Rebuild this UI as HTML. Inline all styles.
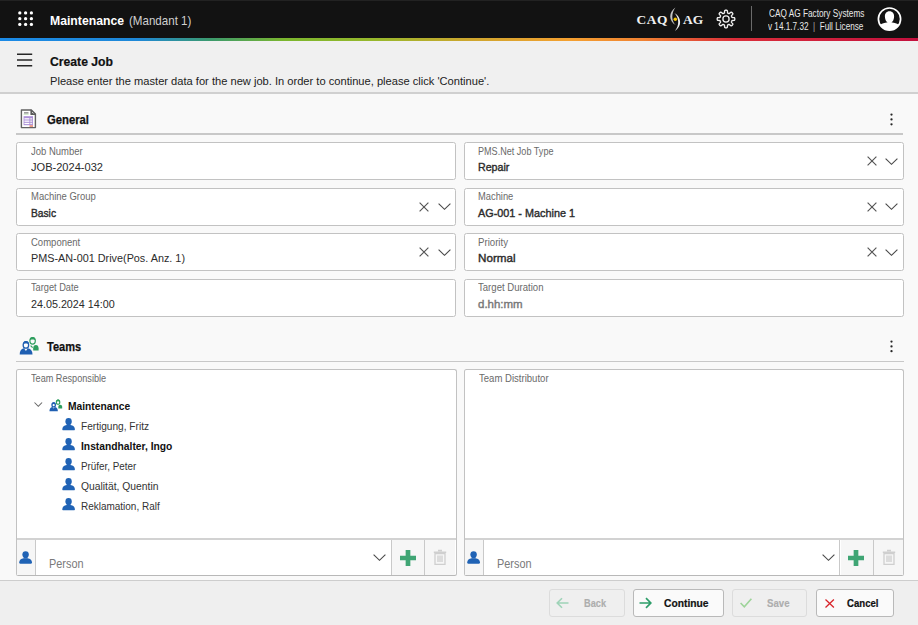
<!DOCTYPE html>
<html><head><meta charset="utf-8">
<style>
html,body{margin:0;padding:0}
body{width:918px;height:625px;overflow:hidden;position:relative;background:#f9f9f9;font-family:"Liberation Sans",sans-serif}
.a{position:absolute}
.t{position:absolute;white-space:nowrap}
.ic{position:absolute;overflow:visible}
.box{position:absolute;box-sizing:border-box;background:#fff;border:1.3px solid #c2c2c2;border-radius:2.5px}
.hdr{position:absolute;left:0;top:0;width:918px;height:38px;background:#121212;border-top:1px solid #222;box-sizing:border-box}
.grad{position:absolute;left:0;top:38px;width:918px;height:3px;background:linear-gradient(90deg,#1b8ae6 0%,#1e88d8 15%,#3c9a6c 23%,#7bb62e 31%,#98b82c 41%,#cda62e 51%,#f4a030 62%,#f08232 70%,#da2e3a 80%,#c3103e 100%)}
.tbar{position:absolute;left:0;top:41px;width:918px;height:51px;background:#f0f0f0;border-bottom:2px solid #d0d0d0}
.sline{position:absolute;height:1.9px;background:#c8c8c8}
.footer{position:absolute;left:0;top:580px;width:918px;height:45px;background:#efefef;border-top:1.3px solid #cdcdcd;box-sizing:border-box}
.btn{position:absolute;box-sizing:border-box;border-radius:3px;top:589.3px;height:27.3px}
.btn.dis{border:1px solid #dcdcdc;background:#efefef}
.btn.en{border:1px solid #b9b9b9;background:#fafafa}
</style></head><body>
<div class="hdr"></div>
<div class="grad"></div>
<!-- grid dots -->
<svg class="ic" style="left:16px;top:9.2px" width="20" height="20" viewBox="0 0 20 20" fill="#fff">
<circle cx="3.8" cy="3.9" r="1.65"/><circle cx="9.6" cy="3.9" r="1.65"/><circle cx="15.4" cy="3.9" r="1.65"/>
<circle cx="3.8" cy="9.7" r="1.65"/><circle cx="9.6" cy="9.7" r="1.65"/><circle cx="15.4" cy="9.7" r="1.65"/>
<circle cx="3.8" cy="15.4" r="1.65"/><circle cx="9.6" cy="15.4" r="1.65"/><circle cx="15.4" cy="15.4" r="1.65"/>
</svg>
<!-- logo -->
<div class="t" style="left:636.6px;top:11.7px;font-family:'Liberation Serif',serif;font-weight:bold;font-size:13.4px;line-height:15px;color:#f0f0f0;letter-spacing:0.55px">CAQ</div>
<div class="t" style="left:683px;top:11.7px;font-family:'Liberation Serif',serif;font-weight:bold;font-size:13.4px;line-height:15px;color:#f0f0f0;letter-spacing:0.1px">AG</div>
<svg class="ic" style="left:660px;top:4px" width="32" height="30" viewBox="0 0 32 30">
<path d="M15.4 3.4 C8.5 8 8.5 17 15.8 21.1 C11.2 17 11.2 9 15.4 3.4Z" fill="#c4c4c4"/>
<path d="M14.4 9.1 C22 13.5 22 22.5 14.9 26.9 C19.4 22 19.4 14 14.4 9.1Z" fill="#ececec"/>
<circle cx="15.3" cy="15.3" r="1.75" fill="#f5c400"/>
</svg>
<!-- gear -->
<svg class="ic" style="left:716.3px;top:9.1px" width="20" height="20" viewBox="0 0 20 20">
<path fill="none" stroke="#eeeeee" stroke-width="1.35" stroke-linejoin="round" d="M10.00 1.20 L10.23 1.20 L10.46 1.22 L10.69 1.25 L10.91 1.31 L11.13 1.45 L11.31 1.74 L11.42 2.32 L11.47 3.07 L11.53 3.64 L11.62 3.94 L11.75 4.09 L11.89 4.17 L12.04 4.24 L12.19 4.30 L12.33 4.36 L12.48 4.43 L12.63 4.49 L12.78 4.54 L12.94 4.58 L13.14 4.57 L13.42 4.42 L13.86 4.06 L14.42 3.56 L14.91 3.24 L15.25 3.16 L15.50 3.21 L15.70 3.33 L15.88 3.47 L16.06 3.62 L16.22 3.78 L16.38 3.94 L16.53 4.12 L16.67 4.30 L16.79 4.50 L16.84 4.75 L16.76 5.09 L16.44 5.58 L15.94 6.14 L15.58 6.58 L15.43 6.86 L15.42 7.06 L15.46 7.22 L15.51 7.37 L15.57 7.52 L15.64 7.67 L15.70 7.81 L15.76 7.96 L15.83 8.11 L15.91 8.25 L16.06 8.38 L16.36 8.47 L16.93 8.53 L17.68 8.58 L18.26 8.69 L18.55 8.87 L18.69 9.09 L18.75 9.31 L18.78 9.54 L18.80 9.77 L18.80 10.00 L18.80 10.23 L18.78 10.46 L18.75 10.69 L18.69 10.91 L18.55 11.13 L18.26 11.31 L17.68 11.42 L16.93 11.47 L16.36 11.53 L16.06 11.62 L15.91 11.75 L15.83 11.89 L15.76 12.04 L15.70 12.19 L15.64 12.33 L15.57 12.48 L15.51 12.63 L15.46 12.78 L15.42 12.94 L15.43 13.14 L15.58 13.42 L15.94 13.86 L16.44 14.42 L16.76 14.91 L16.84 15.25 L16.79 15.50 L16.67 15.70 L16.53 15.88 L16.38 16.06 L16.22 16.22 L16.06 16.38 L15.88 16.53 L15.70 16.67 L15.50 16.79 L15.25 16.84 L14.91 16.76 L14.42 16.44 L13.86 15.94 L13.42 15.58 L13.14 15.43 L12.94 15.42 L12.78 15.46 L12.63 15.51 L12.48 15.57 L12.33 15.64 L12.19 15.70 L12.04 15.76 L11.89 15.83 L11.75 15.91 L11.62 16.06 L11.53 16.36 L11.47 16.93 L11.42 17.68 L11.31 18.26 L11.13 18.55 L10.91 18.69 L10.69 18.75 L10.46 18.78 L10.23 18.80 L10.00 18.80 L9.77 18.80 L9.54 18.78 L9.31 18.75 L9.09 18.69 L8.87 18.55 L8.69 18.26 L8.58 17.68 L8.53 16.93 L8.47 16.36 L8.38 16.06 L8.25 15.91 L8.11 15.83 L7.96 15.76 L7.81 15.70 L7.67 15.64 L7.52 15.57 L7.37 15.51 L7.22 15.46 L7.06 15.42 L6.86 15.43 L6.58 15.58 L6.14 15.94 L5.58 16.44 L5.09 16.76 L4.75 16.84 L4.50 16.79 L4.30 16.67 L4.12 16.53 L3.94 16.38 L3.78 16.22 L3.62 16.06 L3.47 15.88 L3.33 15.70 L3.21 15.50 L3.16 15.25 L3.24 14.91 L3.56 14.42 L4.06 13.86 L4.42 13.42 L4.57 13.14 L4.58 12.94 L4.54 12.78 L4.49 12.63 L4.43 12.48 L4.36 12.33 L4.30 12.19 L4.24 12.04 L4.17 11.89 L4.09 11.75 L3.94 11.62 L3.64 11.53 L3.07 11.47 L2.32 11.42 L1.74 11.31 L1.45 11.13 L1.31 10.91 L1.25 10.69 L1.22 10.46 L1.20 10.23 L1.20 10.00 L1.20 9.77 L1.22 9.54 L1.25 9.31 L1.31 9.09 L1.45 8.87 L1.74 8.69 L2.32 8.58 L3.07 8.53 L3.64 8.47 L3.94 8.38 L4.09 8.25 L4.17 8.11 L4.24 7.96 L4.30 7.81 L4.36 7.67 L4.43 7.52 L4.49 7.37 L4.54 7.22 L4.58 7.06 L4.57 6.86 L4.42 6.58 L4.06 6.14 L3.56 5.58 L3.24 5.09 L3.16 4.75 L3.21 4.50 L3.33 4.30 L3.47 4.12 L3.62 3.94 L3.78 3.78 L3.94 3.62 L4.12 3.47 L4.30 3.33 L4.50 3.21 L4.75 3.16 L5.09 3.24 L5.58 3.56 L6.14 4.06 L6.58 4.42 L6.86 4.57 L7.06 4.58 L7.22 4.54 L7.37 4.49 L7.52 4.43 L7.67 4.36 L7.81 4.30 L7.96 4.24 L8.11 4.17 L8.25 4.09 L8.38 3.94 L8.47 3.64 L8.53 3.07 L8.58 2.32 L8.69 1.74 L8.87 1.45 L9.09 1.31 L9.31 1.25 L9.54 1.22 L9.77 1.20Z"/>
<circle cx="10" cy="10" r="3.1" fill="none" stroke="#eeeeee" stroke-width="1.3"/>
</svg>
<div class="a" style="left:751px;top:6px;width:1.2px;height:25px;background:#6a6a6a"></div>
<!-- avatar -->
<svg class="ic" style="left:877px;top:7px" width="25" height="25" viewBox="0 0 25 25">
<defs><clipPath id="avc"><circle cx="12.5" cy="12.1" r="11"/></clipPath></defs>
<circle cx="12.5" cy="12.1" r="11.1" fill="none" stroke="#fff" stroke-width="1.7"/>
<g clip-path="url(#avc)" fill="#fff">
<path d="M12.5 4.2 C15.6 4.2 17.3 6.5 17.1 9.8 C16.9 12.8 15.8 14.6 14.6 15.4 L14.6 16.2 L10.4 16.2 L10.4 15.4 C9.2 14.6 8.1 12.8 7.9 9.8 C7.7 6.5 9.4 4.2 12.5 4.2Z"/>
<path d="M0 26 L0 21.5 C2 17.5 6 16.3 9.5 15.6 L15.5 15.6 C19 16.3 23 17.5 25 21.5 L25 26Z"/>
</g>
</svg>
<div class="tbar"></div>
<!-- hamburger -->
<svg class="ic" style="left:16px;top:50px" width="18" height="20" viewBox="0 0 18 20"><path d="M1 4.3H16.2M1 10H16.2M1 15.8H16.2" stroke="#262626" stroke-width="1.4" fill="none"/></svg>

<!-- General section -->
<svg class="ic" style="left:20px;top:108.6px" width="17" height="20" viewBox="0 0 17 20">
<path d="M1.4 1 H11.3 L15.4 5.1 V18.6 H1.4 Z" fill="#fff" stroke="#626262" stroke-width="1.4" stroke-linejoin="round"/>
<path d="M11 1.2 V5.4 H15.2Z" fill="#5c5c5c" stroke="#5c5c5c" stroke-width="1.2" stroke-linejoin="round"/><path d="M12.2 3.2 L13.4 4.3" stroke="#fff" stroke-width="0.9"/>
<rect x="4" y="3.3" width="4.5" height="1.2" fill="#777"/>
<rect x="3.6" y="4.8" width="5" height="0.8" fill="#b6dcb0"/><rect x="3.6" y="7.2" width="9.4" height="9" fill="#ac90d8"/>
<rect x="4.4" y="9.2" width="5" height="1.3" fill="#fff"/><rect x="10.2" y="9.2" width="2" height="1.3" fill="#eee"/>
<rect x="4.4" y="11.5" width="5" height="1.3" fill="#fff"/><rect x="10.2" y="11.5" width="2" height="1.3" fill="#eee"/>
<rect x="4.4" y="13.8" width="5" height="1.3" fill="#fff"/><rect x="10.2" y="13.8" width="2" height="1.3" fill="#eee"/>
<rect x="9.5" y="16.3" width="3.5" height="1.5" fill="#e8836a"/>
</svg>
<svg class="ic" style="left:890.3px;top:112.5px" width="3" height="13" viewBox="0 0 3 13" fill="#262626"><circle cx="1.5" cy="1.6" r="1.15"/><circle cx="1.5" cy="6.4" r="1.15"/><circle cx="1.5" cy="11.3" r="1.15"/></svg>
<div class="sline" style="left:15.8px;top:133px;width:887.7px"></div>

<div class="box" style="left:16px;top:142px;width:440.3px;height:38.2px"></div><div class="box" style="left:464.3px;top:142px;width:439.8px;height:38.2px"></div><svg class="ic" style="left:866.8000000000001px;top:156.2px" width="10" height="10" viewBox="0 0 10 10"><path d="M0.6 0.6L9.4 9.4M9.4 0.6L0.6 9.4" stroke="#555" stroke-width="1.15" fill="none"/></svg><svg class="ic" style="left:885.3000000000001px;top:157.5px" width="13" height="7" viewBox="0 0 13 7"><path d="M0.6 0.6L6.5 6.3L12.4 0.6" stroke="#4a4a4a" stroke-width="1.15" fill="none"/></svg><div class="box" style="left:16px;top:187.5px;width:440.3px;height:38.2px"></div><svg class="ic" style="left:419.3px;top:201.7px" width="10" height="10" viewBox="0 0 10 10"><path d="M0.6 0.6L9.4 9.4M9.4 0.6L0.6 9.4" stroke="#555" stroke-width="1.15" fill="none"/></svg><svg class="ic" style="left:437.6px;top:203.0px" width="13" height="7" viewBox="0 0 13 7"><path d="M0.6 0.6L6.5 6.3L12.4 0.6" stroke="#4a4a4a" stroke-width="1.15" fill="none"/></svg><div class="box" style="left:464.3px;top:187.5px;width:439.8px;height:38.2px"></div><svg class="ic" style="left:866.8000000000001px;top:201.7px" width="10" height="10" viewBox="0 0 10 10"><path d="M0.6 0.6L9.4 9.4M9.4 0.6L0.6 9.4" stroke="#555" stroke-width="1.15" fill="none"/></svg><svg class="ic" style="left:885.3000000000001px;top:203.0px" width="13" height="7" viewBox="0 0 13 7"><path d="M0.6 0.6L6.5 6.3L12.4 0.6" stroke="#4a4a4a" stroke-width="1.15" fill="none"/></svg><div class="box" style="left:16px;top:233.2px;width:440.3px;height:38.2px"></div><svg class="ic" style="left:419.3px;top:247.39999999999998px" width="10" height="10" viewBox="0 0 10 10"><path d="M0.6 0.6L9.4 9.4M9.4 0.6L0.6 9.4" stroke="#555" stroke-width="1.15" fill="none"/></svg><svg class="ic" style="left:437.6px;top:248.7px" width="13" height="7" viewBox="0 0 13 7"><path d="M0.6 0.6L6.5 6.3L12.4 0.6" stroke="#4a4a4a" stroke-width="1.15" fill="none"/></svg><div class="box" style="left:464.3px;top:233.2px;width:439.8px;height:38.2px"></div><svg class="ic" style="left:866.8000000000001px;top:247.39999999999998px" width="10" height="10" viewBox="0 0 10 10"><path d="M0.6 0.6L9.4 9.4M9.4 0.6L0.6 9.4" stroke="#555" stroke-width="1.15" fill="none"/></svg><svg class="ic" style="left:885.3000000000001px;top:248.7px" width="13" height="7" viewBox="0 0 13 7"><path d="M0.6 0.6L6.5 6.3L12.4 0.6" stroke="#4a4a4a" stroke-width="1.15" fill="none"/></svg><div class="box" style="left:16px;top:278.8px;width:440.3px;height:38.2px"></div><div class="box" style="left:464.3px;top:278.8px;width:439.8px;height:38.2px"></div>

<!-- Teams section -->
<svg class="ic" style="left:18.5px;top:336px" width="21" height="19" viewBox="0 0 21 19">
<ellipse cx="13.6" cy="4.8" rx="2.7" ry="3.3" fill="none" stroke="#2e9e5e" stroke-width="1.2"/>
<path d="M10.9 4.4 C10.9 1.6 12.4 0.9 13.6 0.9 C15 0.9 16.3 1.6 16.3 4.4 C15.4 3.1 11.8 3.1 10.9 4.4Z" fill="#2e9e5e"/>
<path d="M14.2 14.5 V12.2 C14.2 10.1 15.3 8.9 16.9 8.9 C18.5 8.9 19.6 10.1 19.6 12.2 V14.5Z" fill="#2e9e5e"/>
<path d="M11.6 9.6 L13.6 11.7" stroke="#2e9e5e" stroke-width="1.2"/>
<ellipse cx="6.9" cy="8.9" rx="2.75" ry="3.25" fill="#fff" stroke="#1f5fb2" stroke-width="1.3"/>
<path d="M4.1 8.6 C4.1 5.8 5.5 5 6.9 5 C8.4 5 9.7 5.8 9.7 8.6 C8.7 7.2 5.1 7.2 4.1 8.6Z" fill="#1f5fb2"/>
<path d="M0.7 18.5 C0.7 15.2 1.8 13 4.9 12.3 L6.9 14.9 L8.9 12.3 C12.2 13 13.5 15.2 13.5 18.5Z" fill="#1f5fb2"/>
</svg>
<svg class="ic" style="left:890.3px;top:339.6px" width="3" height="13" viewBox="0 0 3 13" fill="#262626"><circle cx="1.5" cy="1.6" r="1.15"/><circle cx="1.5" cy="6.4" r="1.15"/><circle cx="1.5" cy="11.2" r="1.15"/></svg>
<div class="sline" style="left:15.8px;top:360.5px;width:887.8px"></div>

<!-- team boxes -->
<div class="box" style="left:16px;top:369.3px;width:440.5px;height:207.2px;border-bottom:1.9px solid #b8b8b8"></div>
<div class="box" style="left:464.3px;top:369.3px;width:440px;height:207.2px;border-bottom:1.9px solid #b8b8b8"></div>

<!-- left team box inner -->
<div class="a" style="left:17px;top:538.3px;width:438.5px;height:1.3px;background:#d2d2d2"></div>
<div class="a" style="left:17px;top:539.6px;width:18.6px;height:35.2px;background:#f6f6f6"></div>
<div class="a" style="left:35.3px;top:539.6px;width:1.2px;height:35.2px;background:#c9c9c9"></div>
<div class="a" style="left:391px;top:539.6px;width:1.2px;height:35.2px;background:#c9c9c9"></div>
<div class="a" style="left:392.2px;top:539.6px;width:32px;height:35.2px;background:#f6f6f6"></div>
<div class="a" style="left:424.2px;top:539.6px;width:1.2px;height:35.2px;background:#c9c9c9"></div>
<div class="a" style="left:425.4px;top:539.6px;width:30px;height:35.2px;background:#f6f6f6"></div>

<div class="a" style="left:465.3px;top:538.3px;width:438px;height:1.3px;background:#d2d2d2"></div>
<div class="a" style="left:465.3px;top:539.6px;width:17.8px;height:35.2px;background:#f6f6f6"></div>
<div class="a" style="left:482.9px;top:539.6px;width:1.2px;height:35.2px;background:#c9c9c9"></div>
<div class="a" style="left:839.3px;top:539.6px;width:1.2px;height:35.2px;background:#c9c9c9"></div>
<div class="a" style="left:840.5px;top:539.6px;width:32px;height:35.2px;background:#f6f6f6"></div>
<div class="a" style="left:872.5px;top:539.6px;width:1.2px;height:35.2px;background:#c9c9c9"></div>
<div class="a" style="left:873.7px;top:539.6px;width:29.6px;height:35.2px;background:#f6f6f6"></div>

<!-- tree -->
<svg class="ic" style="left:33.6px;top:402.3px" width="8.6" height="5" viewBox="0 0 8.6 5"><path d="M0.5 0.5L4.3 4.3L8.1 0.5" stroke="#666" stroke-width="1.05" fill="none"/></svg>
<svg class="ic" style="left:49.2px;top:398.5px" width="13.6" height="12.2" viewBox="0 0 20.3 18.6">
<ellipse cx="13.6" cy="4.8" rx="2.6" ry="3.2" fill="none" stroke="#2e9e5e" stroke-width="1.8"/>
<path d="M10.9 4.4 C10.9 1.6 12.4 0.9 13.6 0.9 C15 0.9 16.3 1.6 16.3 4.4 C15.4 3.1 11.8 3.1 10.9 4.4Z" fill="#2e9e5e"/>
<path d="M14 14.6 V12.2 C14 10 15.2 8.7 16.9 8.7 C18.6 8.7 19.9 10 19.9 12.2 V14.6Z" fill="#2e9e5e"/>
<ellipse cx="6.9" cy="9" rx="2.6" ry="3.1" fill="#fff" stroke="#1f5fb2" stroke-width="1.9"/>
<path d="M4.1 8.6 C4.1 5.8 5.5 5 6.9 5 C8.4 5 9.7 5.8 9.7 8.6 C8.7 7.2 5.1 7.2 4.1 8.6Z" fill="#1f5fb2"/>
<path d="M0.5 18.6 C0.5 15.2 1.6 12.9 4.9 12.2 L6.9 14.6 L8.9 12.2 C12.2 12.9 13.3 15.2 13.3 18.6Z" fill="#1f5fb2"/>
</svg>
<svg class="ic" style="left:62px;top:418.4px" width="13.2" height="12.3" viewBox="0 0 13 12.3"><ellipse cx="6.5" cy="3.4" rx="3.2" ry="3.35" fill="#2063b5"/><path d="M4.6 5.5 H8.4 V7.2 H4.6Z" fill="#2063b5"/><path d="M1.3 12.3 C0.4 12.3 0.1 11.7 0.2 10.9 C0.5 8.6 1.8 7.4 4.6 6.9 L8.4 6.9 C11.2 7.4 12.5 8.6 12.8 10.9 C12.9 11.7 12.6 12.3 11.7 12.3Z" fill="#2063b5"/></svg><svg class="ic" style="left:62px;top:438.4px" width="13.2" height="12.3" viewBox="0 0 13 12.3"><ellipse cx="6.5" cy="3.4" rx="3.2" ry="3.35" fill="#2063b5"/><path d="M4.6 5.5 H8.4 V7.2 H4.6Z" fill="#2063b5"/><path d="M1.3 12.3 C0.4 12.3 0.1 11.7 0.2 10.9 C0.5 8.6 1.8 7.4 4.6 6.9 L8.4 6.9 C11.2 7.4 12.5 8.6 12.8 10.9 C12.9 11.7 12.6 12.3 11.7 12.3Z" fill="#2063b5"/></svg><svg class="ic" style="left:62px;top:458.4px" width="13.2" height="12.3" viewBox="0 0 13 12.3"><ellipse cx="6.5" cy="3.4" rx="3.2" ry="3.35" fill="#2063b5"/><path d="M4.6 5.5 H8.4 V7.2 H4.6Z" fill="#2063b5"/><path d="M1.3 12.3 C0.4 12.3 0.1 11.7 0.2 10.9 C0.5 8.6 1.8 7.4 4.6 6.9 L8.4 6.9 C11.2 7.4 12.5 8.6 12.8 10.9 C12.9 11.7 12.6 12.3 11.7 12.3Z" fill="#2063b5"/></svg><svg class="ic" style="left:62px;top:478.4px" width="13.2" height="12.3" viewBox="0 0 13 12.3"><ellipse cx="6.5" cy="3.4" rx="3.2" ry="3.35" fill="#2063b5"/><path d="M4.6 5.5 H8.4 V7.2 H4.6Z" fill="#2063b5"/><path d="M1.3 12.3 C0.4 12.3 0.1 11.7 0.2 10.9 C0.5 8.6 1.8 7.4 4.6 6.9 L8.4 6.9 C11.2 7.4 12.5 8.6 12.8 10.9 C12.9 11.7 12.6 12.3 11.7 12.3Z" fill="#2063b5"/></svg><svg class="ic" style="left:62px;top:498.4px" width="13.2" height="12.3" viewBox="0 0 13 12.3"><ellipse cx="6.5" cy="3.4" rx="3.2" ry="3.35" fill="#2063b5"/><path d="M4.6 5.5 H8.4 V7.2 H4.6Z" fill="#2063b5"/><path d="M1.3 12.3 C0.4 12.3 0.1 11.7 0.2 10.9 C0.5 8.6 1.8 7.4 4.6 6.9 L8.4 6.9 C11.2 7.4 12.5 8.6 12.8 10.9 C12.9 11.7 12.6 12.3 11.7 12.3Z" fill="#2063b5"/></svg><svg class="ic" style="left:18.6px;top:551px" width="13.2" height="12.8" viewBox="0 0 13 12.3"><ellipse cx="6.5" cy="3.4" rx="3.2" ry="3.35" fill="#2063b5"/><path d="M4.6 5.5 H8.4 V7.2 H4.6Z" fill="#2063b5"/><path d="M1.3 12.3 C0.4 12.3 0.1 11.7 0.2 10.9 C0.5 8.6 1.8 7.4 4.6 6.9 L8.4 6.9 C11.2 7.4 12.5 8.6 12.8 10.9 C12.9 11.7 12.6 12.3 11.7 12.3Z" fill="#2063b5"/></svg><svg class="ic" style="left:373.2px;top:554.2px" width="13" height="7" viewBox="0 0 13 7"><path d="M0.6 0.6L6.5 6.3L12.4 0.6" stroke="#4a4a4a" stroke-width="1.15" fill="none"/></svg><svg class="ic" style="left:399.8px;top:549.8px" width="16" height="16" viewBox="0 0 16 16"><path d="M5.65 0H10.35V5.65H16V10.35H10.35V16H5.65V10.35H0V5.65H5.65Z" fill="#3fa574"/></svg><svg class="ic" style="left:433.2px;top:549px" width="14" height="16" viewBox="0 0 14 16"><path d="M5 1.5H9M0.8 3.3H13.2" stroke="#cfcfcf" stroke-width="1.4" fill="none"/><path d="M2 4.5H12V15.3H2Z" fill="none" stroke="#cfcfcf" stroke-width="1.3"/><rect x="4" y="6.5" width="6" height="6.5" fill="#dcdcdc"/></svg><svg class="ic" style="left:466.90000000000003px;top:551px" width="13.2" height="12.8" viewBox="0 0 13 12.3"><ellipse cx="6.5" cy="3.4" rx="3.2" ry="3.35" fill="#2063b5"/><path d="M4.6 5.5 H8.4 V7.2 H4.6Z" fill="#2063b5"/><path d="M1.3 12.3 C0.4 12.3 0.1 11.7 0.2 10.9 C0.5 8.6 1.8 7.4 4.6 6.9 L8.4 6.9 C11.2 7.4 12.5 8.6 12.8 10.9 C12.9 11.7 12.6 12.3 11.7 12.3Z" fill="#2063b5"/></svg><svg class="ic" style="left:821.5px;top:554.2px" width="13" height="7" viewBox="0 0 13 7"><path d="M0.6 0.6L6.5 6.3L12.4 0.6" stroke="#4a4a4a" stroke-width="1.15" fill="none"/></svg><svg class="ic" style="left:848.1px;top:549.8px" width="16" height="16" viewBox="0 0 16 16"><path d="M5.65 0H10.35V5.65H16V10.35H10.35V16H5.65V10.35H0V5.65H5.65Z" fill="#3fa574"/></svg><svg class="ic" style="left:881.5px;top:549px" width="14" height="16" viewBox="0 0 14 16"><path d="M5 1.5H9M0.8 3.3H13.2" stroke="#cfcfcf" stroke-width="1.4" fill="none"/><path d="M2 4.5H12V15.3H2Z" fill="none" stroke="#cfcfcf" stroke-width="1.3"/><rect x="4" y="6.5" width="6" height="6.5" fill="#dcdcdc"/></svg>

<div class="footer"></div>
<div class="btn dis" style="left:549.3px;width:75.6px"></div>
<div class="btn en" style="left:633.2px;width:90.4px"></div>
<div class="btn dis" style="left:732.4px;width:74.6px"></div>
<div class="btn en" style="left:816px;width:77.6px"></div>
<svg class="ic" style="left:555.5px;top:597px" width="13" height="12" viewBox="0 0 13 12"><path d="M12.5 6H1.2M6 1.2L1.2 6L6 10.8" stroke="#9fd3b8" stroke-width="1.6" fill="none"/></svg>
<svg class="ic" style="left:639.4px;top:597px" width="13" height="12" viewBox="0 0 13 12"><path d="M0.5 6H11.8M7 1.2L11.8 6L7 10.8" stroke="#2e9e6a" stroke-width="1.7" fill="none"/></svg>
<svg class="ic" style="left:739.7px;top:597.5px" width="12" height="10" viewBox="0 0 12 10"><path d="M0.6 5L4.3 8.8L11.4 0.8" stroke="#9ed49a" stroke-width="1.6" fill="none"/></svg>
<svg class="ic" style="left:825px;top:598.6px" width="9.4" height="9" viewBox="0 0 9.4 9"><path d="M0.5 0.5L8.9 8.5M8.9 0.5L0.5 8.5" stroke="#d8232a" stroke-width="1.3" fill="none"/></svg>

<div class="t" id="t0" style="left:50.00px;top:14.92px;font-size:12.6px;line-height:12.6px;font-weight:bold;color:#ffffff;font-family:'Liberation Sans', sans-serif;transform:scaleX(0.9699);transform-origin:0 0;">Maintenance<span class="bl" style="display:inline-block;width:0;height:0"></span></div><div class="t" id="t1" style="left:128.90px;top:14.92px;font-size:12.6px;line-height:12.6px;font-weight:normal;color:#d0d0d0;font-family:'Liberation Sans', sans-serif;transform:scaleX(0.9189);transform-origin:0 0;">(Mandant 1)<span class="bl" style="display:inline-block;width:0;height:0"></span></div><div class="t" id="t2" style="left:768.70px;top:8.72px;font-size:10px;line-height:10px;font-weight:normal;color:#e8e8e8;font-family:'Liberation Sans', sans-serif;transform:scaleX(0.8253);transform-origin:0 0;">CAQ AG Factory Systems<span class="bl" style="display:inline-block;width:0;height:0"></span></div><div class="t" id="t3" style="left:768.20px;top:21.91px;font-size:10px;line-height:10px;font-weight:normal;color:#e8e8e8;font-family:'Liberation Sans', sans-serif;transform:scaleX(0.8183);transform-origin:0 0;">v 14.1.7.32 &nbsp;<span style="color:#aaa">|</span>&nbsp; Full License<span class="bl" style="display:inline-block;width:0;height:0"></span></div><div class="t" id="t4" style="left:50.00px;top:55.72px;font-size:12.6px;line-height:12.6px;font-weight:bold;color:#111;font-family:'Liberation Sans', sans-serif;-webkit-text-stroke:0.2px #111;transform:scaleX(0.9678);transform-origin:0 0;">Create Job<span class="bl" style="display:inline-block;width:0;height:0"></span></div><div class="t" id="t5" style="left:50.00px;top:75.71px;font-size:10.6px;line-height:10.6px;font-weight:normal;color:#222;font-family:'Liberation Sans', sans-serif;transform:scaleX(1.0494);transform-origin:0 0;">Please enter the master data for the new job. In order to continue, please click 'Continue'.<span class="bl" style="display:inline-block;width:0;height:0"></span></div><div class="t" id="t6" style="left:47.10px;top:113.61px;font-size:12.2px;line-height:12.2px;font-weight:bold;color:#111;font-family:'Liberation Sans', sans-serif;-webkit-text-stroke:0.25px #111;transform:scaleX(0.9253);transform-origin:0 0;">General<span class="bl" style="display:inline-block;width:0;height:0"></span></div><div class="t" id="t7" style="left:47.20px;top:341.30px;font-size:12.2px;line-height:12.2px;font-weight:bold;color:#111;font-family:'Liberation Sans', sans-serif;-webkit-text-stroke:0.25px #111;transform:scaleX(0.9041);transform-origin:0 0;">Teams<span class="bl" style="display:inline-block;width:0;height:0"></span></div><div class="t" id="t8" style="left:30.50px;top:146.60px;font-size:10.4px;line-height:10.4px;font-weight:normal;color:#6a6a6a;font-family:'Liberation Sans', sans-serif;transform:scaleX(0.9115);transform-origin:0 0;">Job Number<span class="bl" style="display:inline-block;width:0;height:0"></span></div><div class="t" id="t9" style="left:30.50px;top:160.90px;font-size:11.6px;line-height:11.6px;font-weight:normal;color:#2b2b2b;font-family:'Liberation Sans', sans-serif;transform:scaleX(0.9548);transform-origin:0 0;">JOB-2024-032<span class="bl" style="display:inline-block;width:0;height:0"></span></div><div class="t" id="t10" style="left:478.30px;top:146.60px;font-size:10.4px;line-height:10.4px;font-weight:normal;color:#6a6a6a;font-family:'Liberation Sans', sans-serif;transform:scaleX(0.8735);transform-origin:0 0;">PMS.Net Job Type<span class="bl" style="display:inline-block;width:0;height:0"></span></div><div class="t" id="t11" style="left:478.30px;top:160.90px;font-size:11.6px;line-height:11.6px;font-weight:normal;color:#2b2b2b;font-family:'Liberation Sans', sans-serif;-webkit-text-stroke:0.4px #2b2b2b;transform:scaleX(0.9193);transform-origin:0 0;">Repair<span class="bl" style="display:inline-block;width:0;height:0"></span></div><div class="t" id="t12" style="left:30.50px;top:192.21px;font-size:10.4px;line-height:10.4px;font-weight:normal;color:#6a6a6a;font-family:'Liberation Sans', sans-serif;transform:scaleX(0.9107);transform-origin:0 0;">Machine Group<span class="bl" style="display:inline-block;width:0;height:0"></span></div><div class="t" id="t13" style="left:30.50px;top:206.51px;font-size:11.6px;line-height:11.6px;font-weight:normal;color:#2b2b2b;font-family:'Liberation Sans', sans-serif;-webkit-text-stroke:0.4px #2b2b2b;transform:scaleX(0.8815);transform-origin:0 0;">Basic<span class="bl" style="display:inline-block;width:0;height:0"></span></div><div class="t" id="t14" style="left:478.30px;top:192.21px;font-size:10.4px;line-height:10.4px;font-weight:normal;color:#6a6a6a;font-family:'Liberation Sans', sans-serif;transform:scaleX(0.8986);transform-origin:0 0;">Machine<span class="bl" style="display:inline-block;width:0;height:0"></span></div><div class="t" id="t15" style="left:478.30px;top:206.51px;font-size:11.6px;line-height:11.6px;font-weight:normal;color:#2b2b2b;font-family:'Liberation Sans', sans-serif;-webkit-text-stroke:0.4px #2b2b2b;transform:scaleX(0.9349);transform-origin:0 0;">AG-001 - Machine 1<span class="bl" style="display:inline-block;width:0;height:0"></span></div><div class="t" id="t16" style="left:30.50px;top:237.80px;font-size:10.4px;line-height:10.4px;font-weight:normal;color:#6a6a6a;font-family:'Liberation Sans', sans-serif;transform:scaleX(0.9156);transform-origin:0 0;">Component<span class="bl" style="display:inline-block;width:0;height:0"></span></div><div class="t" id="t17" style="left:30.50px;top:252.11px;font-size:11.6px;line-height:11.6px;font-weight:normal;color:#2b2b2b;font-family:'Liberation Sans', sans-serif;transform:scaleX(0.9336);transform-origin:0 0;">PMS-AN-001 Drive(Pos. Anz. 1)<span class="bl" style="display:inline-block;width:0;height:0"></span></div><div class="t" id="t18" style="left:478.30px;top:237.80px;font-size:10.4px;line-height:10.4px;font-weight:normal;color:#6a6a6a;font-family:'Liberation Sans', sans-serif;transform:scaleX(0.9275);transform-origin:0 0;">Priority<span class="bl" style="display:inline-block;width:0;height:0"></span></div><div class="t" id="t19" style="left:478.30px;top:252.11px;font-size:11.6px;line-height:11.6px;font-weight:normal;color:#2b2b2b;font-family:'Liberation Sans', sans-serif;-webkit-text-stroke:0.4px #2b2b2b;transform:scaleX(1.0060);transform-origin:0 0;">Normal<span class="bl" style="display:inline-block;width:0;height:0"></span></div><div class="t" id="t20" style="left:30.50px;top:283.40px;font-size:10.4px;line-height:10.4px;font-weight:normal;color:#6a6a6a;font-family:'Liberation Sans', sans-serif;transform:scaleX(0.8880);transform-origin:0 0;">Target Date<span class="bl" style="display:inline-block;width:0;height:0"></span></div><div class="t" id="t21" style="left:30.50px;top:297.71px;font-size:11.6px;line-height:11.6px;font-weight:normal;color:#2b2b2b;font-family:'Liberation Sans', sans-serif;transform:scaleX(0.9273);transform-origin:0 0;">24.05.2024 14:00<span class="bl" style="display:inline-block;width:0;height:0"></span></div><div class="t" id="t22" style="left:478.30px;top:283.40px;font-size:10.4px;line-height:10.4px;font-weight:normal;color:#6a6a6a;font-family:'Liberation Sans', sans-serif;transform:scaleX(0.9219);transform-origin:0 0;">Target Duration<span class="bl" style="display:inline-block;width:0;height:0"></span></div><div class="t" id="t23" style="left:478.30px;top:297.71px;font-size:11.6px;line-height:11.6px;font-weight:normal;color:#777;font-family:'Liberation Sans', sans-serif;-webkit-text-stroke:0.4px #777;transform:scaleX(0.9909);transform-origin:0 0;">d.hh:mm<span class="bl" style="display:inline-block;width:0;height:0"></span></div><div class="t" id="t24" style="left:30.90px;top:373.90px;font-size:10.4px;line-height:10.4px;font-weight:normal;color:#6a6a6a;font-family:'Liberation Sans', sans-serif;transform:scaleX(0.8785);transform-origin:0 0;">Team Responsible<span class="bl" style="display:inline-block;width:0;height:0"></span></div><div class="t" id="t25" style="left:478.80px;top:373.90px;font-size:10.4px;line-height:10.4px;font-weight:normal;color:#6a6a6a;font-family:'Liberation Sans', sans-serif;transform:scaleX(0.9201);transform-origin:0 0;">Team Distributor<span class="bl" style="display:inline-block;width:0;height:0"></span></div><div class="t" id="t26" style="left:68.10px;top:400.61px;font-size:11.2px;line-height:11.2px;font-weight:bold;color:#111;font-family:'Liberation Sans', sans-serif;transform:scaleX(0.9164);transform-origin:0 0;">Maintenance<span class="bl" style="display:inline-block;width:0;height:0"></span></div><div class="t" id="t27" style="left:81.30px;top:421.71px;font-size:10.4px;line-height:10.4px;font-weight:normal;color:#333;font-family:'Liberation Sans', sans-serif;transform:scaleX(0.9732);transform-origin:0 0;">Fertigung, Fritz<span class="bl" style="display:inline-block;width:0;height:0"></span></div><div class="t" id="t28" style="left:81.30px;top:441.71px;font-size:10.4px;line-height:10.4px;font-weight:bold;color:#111;font-family:'Liberation Sans', sans-serif;transform:scaleX(0.9894);transform-origin:0 0;">Instandhalter, Ingo<span class="bl" style="display:inline-block;width:0;height:0"></span></div><div class="t" id="t29" style="left:81.30px;top:461.71px;font-size:10.4px;line-height:10.4px;font-weight:normal;color:#333;font-family:'Liberation Sans', sans-serif;transform:scaleX(0.9478);transform-origin:0 0;">Prüfer, Peter<span class="bl" style="display:inline-block;width:0;height:0"></span></div><div class="t" id="t30" style="left:81.30px;top:481.71px;font-size:10.4px;line-height:10.4px;font-weight:normal;color:#333;font-family:'Liberation Sans', sans-serif;transform:scaleX(0.9938);transform-origin:0 0;">Qualität, Quentin<span class="bl" style="display:inline-block;width:0;height:0"></span></div><div class="t" id="t31" style="left:81.30px;top:501.71px;font-size:10.4px;line-height:10.4px;font-weight:normal;color:#333;font-family:'Liberation Sans', sans-serif;transform:scaleX(0.9596);transform-origin:0 0;">Reklamation, Ralf<span class="bl" style="display:inline-block;width:0;height:0"></span></div><div class="t" id="t32" style="left:48.70px;top:558.11px;font-size:12.2px;line-height:12.2px;font-weight:normal;color:#7a7a7a;font-family:'Liberation Sans', sans-serif;transform:scaleX(0.8932);transform-origin:0 0;">Person<span class="bl" style="display:inline-block;width:0;height:0"></span></div><div class="t" id="t33" style="left:496.70px;top:558.11px;font-size:12.2px;line-height:12.2px;font-weight:normal;color:#7a7a7a;font-family:'Liberation Sans', sans-serif;transform:scaleX(0.8932);transform-origin:0 0;">Person<span class="bl" style="display:inline-block;width:0;height:0"></span></div><div class="t" id="t34" style="left:584.00px;top:597.91px;font-size:11.2px;line-height:11.2px;font-weight:bold;color:#adadad;font-family:'Liberation Sans', sans-serif;-webkit-text-stroke:0.15px #adadad;transform:scaleX(0.8224);transform-origin:0 0;">Back<span class="bl" style="display:inline-block;width:0;height:0"></span></div><div class="t" id="t35" style="left:664.20px;top:597.91px;font-size:11.2px;line-height:11.2px;font-weight:bold;color:#111;font-family:'Liberation Sans', sans-serif;-webkit-text-stroke:0.2px #111;transform:scaleX(0.9178);transform-origin:0 0;">Continue<span class="bl" style="display:inline-block;width:0;height:0"></span></div><div class="t" id="t36" style="left:766.60px;top:597.91px;font-size:11.2px;line-height:11.2px;font-weight:bold;color:#adadad;font-family:'Liberation Sans', sans-serif;-webkit-text-stroke:0.15px #adadad;transform:scaleX(0.8607);transform-origin:0 0;">Save<span class="bl" style="display:inline-block;width:0;height:0"></span></div><div class="t" id="t37" style="left:847.00px;top:597.91px;font-size:11.2px;line-height:11.2px;font-weight:bold;color:#111;font-family:'Liberation Sans', sans-serif;-webkit-text-stroke:0.2px #111;transform:scaleX(0.8586);transform-origin:0 0;">Cancel<span class="bl" style="display:inline-block;width:0;height:0"></span></div>
</body></html>
